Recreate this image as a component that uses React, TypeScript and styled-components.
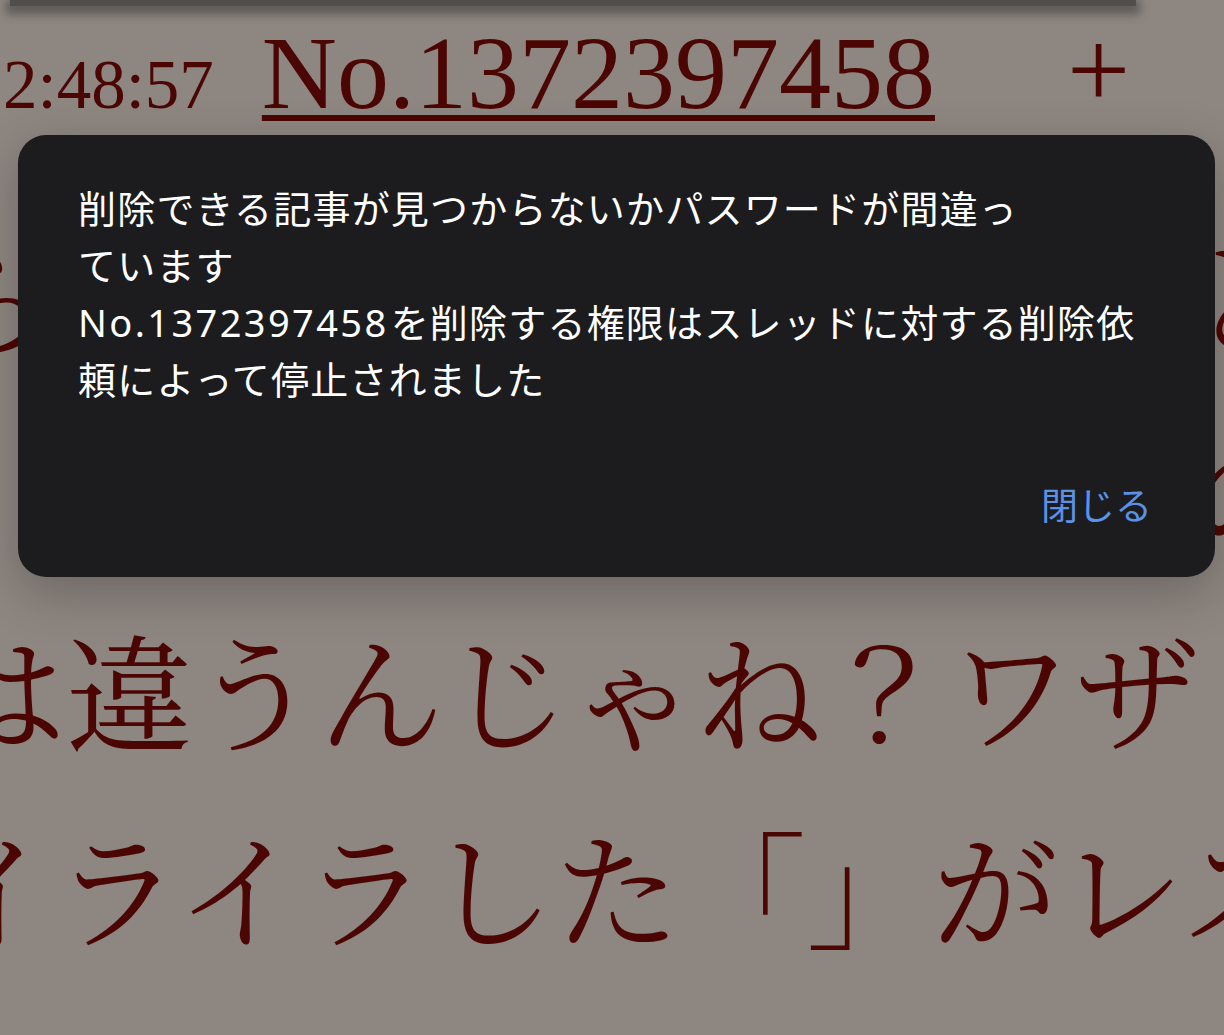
import React from "react";
import styled, { createGlobalStyle } from "styled-components";

const GlobalStyle = createGlobalStyle`
  html, body {
    margin: 0;
    padding: 0;
  }
  body {
    background: #8d8681;
    overflow: hidden;
  }
`;

const Page = styled.div`
  position: relative;
  width: 1224px;
  height: 1035px;
  overflow: hidden;
  background: #8d8681;
`;

const TopBar = styled.div`
  height: 6px;
  width: 1126px;
  margin-left: 10px;
  background: #504e4c;
  box-shadow: 0 4px 10px 4px rgba(60, 58, 56, 0.6);
`;

const Thread = styled.div`
  margin-left: -66px;
  color: #4b0603;
`;

const HeaderRow = styled.div`
  display: flex;
  align-items: baseline;
  height: 140px;
  font-family: "Liberation Serif", "Times New Roman", serif;
  white-space: nowrap;
`;

const Time = styled.span`
  font-size: 69px;
  margin-left: 69px;
`;

const PostNo = styled.a`
  font-size: 104px;
  margin-left: 48px;
  color: inherit;
  text-decoration: underline;
  text-decoration-thickness: 6px;
  text-underline-offset: 7px;
`;

const Plus = styled.span`
  font-size: 112px;
  margin-left: 132px;
`;

const Body = styled.div`
  margin-top: 49px;
  margin-left: -6px;
  font-family: "Noto Serif CJK JP", "Noto Sans CJK JP", serif;
  font-size: 126px;
  line-height: 197px;
  white-space: nowrap;
`;

const Line = styled.div<{ $indent?: number }>`
  padding-left: ${(p) => p.$indent ?? 0}px;
`;

const Dialog = styled.div`
  position: absolute;
  left: 18px;
  top: 135px;
  width: 1197px;
  height: 442px;
  box-sizing: border-box;
  padding: 45px 63px 43px 60px;
  background: #1c1c1e;
  border-radius: 28px;
  box-shadow: 0 16px 50px rgba(20, 16, 14, 0.26);
  display: flex;
  flex-direction: column;
  font-family: "Noto Sans", "Noto Sans CJK JP", sans-serif;
`;

const Message = styled.div`
  color: #ffffff;
  font-size: 38px;
  line-height: 57px;
  letter-spacing: 1.2px;
`;

const Num = styled.span`
  letter-spacing: 2.4px;
  margin-right: 2px;
`;

const Actions = styled.div`
  margin-top: auto;
  display: flex;
  justify-content: flex-end;
`;

const CloseButton = styled.button`
  background: none;
  border: none;
  padding: 0;
  font-family: inherit;
  font-size: 37px;
  line-height: 57px;
  color: #5b91e6;
  cursor: pointer;
`;

export default function App() {
  return (
    <>
      <GlobalStyle />
      <Page>
        <TopBar />
        <Thread>
          <HeaderRow>
            <Time>2:48:57</Time>
            <PostNo>No.1372397458</PostNo>
            <Plus>+</Plus>
          </HeaderRow>
          <Body>
            <Line>らうちのスレでみんなと言うのをやめろ</Line>
            <Line>、ほんとにそれでいいのかよクソスレ</Line>
            <Line $indent={12}>は違うんじゃね？ワザ</Line>
            <Line>イライラした「」がレスして</Line>
          </Body>
        </Thread>
        <Dialog role="alertdialog">
          <Message>
            削除できる記事が見つからないかパスワードが間違っ
            <br />
            ています
            <br />
            <Num>No.1372397458</Num>を削除する権限はスレッドに対する削除依
            <br />
            頼によって停止されました
          </Message>
          <Actions>
            <CloseButton>閉じる</CloseButton>
          </Actions>
        </Dialog>
      </Page>
    </>
  );
}
